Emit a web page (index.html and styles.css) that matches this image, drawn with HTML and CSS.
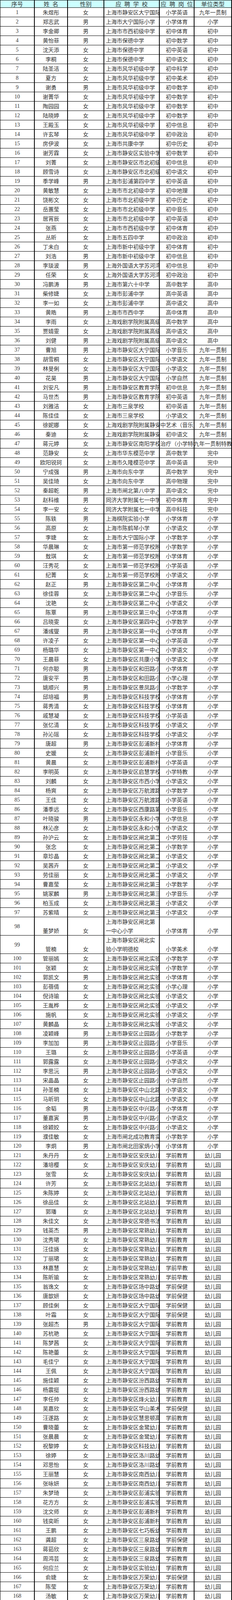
FILE: index.html
```html
<!DOCTYPE html>
<html lang="zh-CN">
<head>
<meta charset="utf-8">
<title>应聘人员名单</title>
<link rel="stylesheet" href="styles.css">
</head>
<body>
<div class="sheet">
<div class="r head"><span>序号</span><span>姓&ensp;名</span><span>性别</span><span>应&ensp;聘&ensp;学&ensp;校</span><span>应&ensp;聘&ensp;岗&ensp;位</span><span>单位类型</span></div>
<div class="r"><span>1</span><span>朱煜彤</span><span>女</span><span>上海市静安区大宁国际学校</span><span>小学英语</span><span>九年一贯制</span></div>
<div class="r"><span>2</span><span>郑志武</span><span>男</span><span>上海市大宁国际小学</span><span>小学体育</span><span>小学</span></div>
<div class="r"><span>3</span><span>李金卿</span><span>男</span><span>上海市市西初级中学</span><span>初中体育</span><span>初中</span></div>
<div class="r"><span>4</span><span>黄怡菲</span><span>男</span><span>上海市保德中学</span><span>初中数学</span><span>初中</span></div>
<div class="r"><span>5</span><span>沈天添</span><span>女</span><span>上海市保德中学</span><span>初中英语</span><span>初中</span></div>
<div class="r"><span>6</span><span>李桐</span><span>女</span><span>上海市保德中学</span><span>初中语文</span><span>初中</span></div>
<div class="r"><span>7</span><span>陆圣洁</span><span>女</span><span>上海市风华初级中学</span><span>初中科学</span><span>初中</span></div>
<div class="r"><span>8</span><span>夏方</span><span>女</span><span>上海市风华初级中学</span><span>初中美术</span><span>初中</span></div>
<div class="r"><span>9</span><span>谢勇</span><span>男</span><span>上海市风华初级中学</span><span>初中数学</span><span>初中</span></div>
<div class="r"><span>10</span><span>谢菁华</span><span>女</span><span>上海市风华初级中学</span><span>初中数学</span><span>初中</span></div>
<div class="r"><span>11</span><span>陶园园</span><span>女</span><span>上海市风华初级中学</span><span>初中数学</span><span>初中</span></div>
<div class="r"><span>12</span><span>陆晓婷</span><span>女</span><span>上海市风华初级中学</span><span>初中数学</span><span>初中</span></div>
<div class="r"><span>13</span><span>王殿玉</span><span>女</span><span>上海市风华初级中学</span><span>初中信息</span><span>初中</span></div>
<div class="r"><span>14</span><span>许玄琴</span><span>女</span><span>上海市风华初级中学</span><span>初中政治</span><span>初中</span></div>
<div class="r"><span>15</span><span>房伊波</span><span>女</span><span>上海市共康中学</span><span>初中历史</span><span>初中</span></div>
<div class="r"><span>16</span><span>谢芳霖</span><span>女</span><span>上海市静安区实验中学</span><span>初中数学</span><span>初中</span></div>
<div class="r"><span>17</span><span>刘菁</span><span>女</span><span>上海市静安区市北初级中学</span><span>初中信息</span><span>初中</span></div>
<div class="r"><span>18</span><span>顾雪诗</span><span>女</span><span>上海市静安区市北初级中学</span><span>初中语文</span><span>初中</span></div>
<div class="r"><span>19</span><span>季学峰</span><span>男</span><span>上海市彭浦第四中学</span><span>初中英语</span><span>初中</span></div>
<div class="r"><span>20</span><span>黄敏慧</span><span>女</span><span>上海市市北初级中学</span><span>初中地理</span><span>初中</span></div>
<div class="r"><span>21</span><span>饶彬文</span><span>女</span><span>上海市市北初级中学</span><span>初中历史</span><span>初中</span></div>
<div class="r"><span>22</span><span>岳蕙莹</span><span>女</span><span>上海市市北初级中学</span><span>初中音乐</span><span>初中</span></div>
<div class="r"><span>23</span><span>居宵辰</span><span>女</span><span>上海市市北初级中学</span><span>初中英语</span><span>初中</span></div>
<div class="r"><span>24</span><span>张燕</span><span>女</span><span>上海市市西初级中学</span><span>初中体育</span><span>初中</span></div>
<div class="r"><span>25</span><span>丛昕</span><span>女</span><span>上海市五四中学</span><span>初中政治</span><span>初中</span></div>
<div class="r"><span>26</span><span>丁未白</span><span>女</span><span>上海市新中初级中学</span><span>初中体育</span><span>初中</span></div>
<div class="r"><span>27</span><span>刘浩</span><span>男</span><span>上海市新中初级中学</span><span>初中信息</span><span>初中</span></div>
<div class="r"><span>28</span><span>李琰波</span><span>男</span><span>上海外国语大学苏河湾实验中学</span><span>初中信息</span><span>初中</span></div>
<div class="r"><span>29</span><span>任荣</span><span>女</span><span>上海外国语大学苏河湾实验中学</span><span>初中政治</span><span>初中</span></div>
<div class="r"><span>30</span><span>冯鹏涛</span><span>男</span><span>上海市第六十中学</span><span>高中数学</span><span>高中</span></div>
<div class="r"><span>31</span><span>柴修婕</span><span>女</span><span>上海市彭浦中学</span><span>高中英语</span><span>高中</span></div>
<div class="r"><span>32</span><span>李一如</span><span>女</span><span>上海市彭浦中学</span><span>高中语文</span><span>高中</span></div>
<div class="r"><span>33</span><span>黄皓</span><span>男</span><span>上海市市西中学</span><span>高中体育</span><span>高中</span></div>
<div class="r"><span>34</span><span>李雨</span><span>女</span><span>上海戏剧学院附属高级中学</span><span>高中数学</span><span>高中</span></div>
<div class="r"><span>35</span><span>贾婧雯</span><span>女</span><span>上海戏剧学院附属高级中学</span><span>高中语文</span><span>高中</span></div>
<div class="r"><span>36</span><span>刘健</span><span>男</span><span>上海戏剧学院附属高级中学</span><span>高中语文</span><span>高中</span></div>
<div class="r"><span>37</span><span>曹旭</span><span>男</span><span>上海市静安区大宁国际学校</span><span>小学音乐</span><span>九年一贯制</span></div>
<div class="r"><span>38</span><span>胡雪桐</span><span>女</span><span>上海市静安区大宁国际学校</span><span>小学语文</span><span>九年一贯制</span></div>
<div class="r"><span>39</span><span>林旻俐</span><span>女</span><span>上海市静安区大宁国际学校</span><span>小学语文</span><span>九年一贯制</span></div>
<div class="r"><span>40</span><span>花昊</span><span>男</span><span>上海市静安区大宁国际学校</span><span>小学自然</span><span>九年一贯制</span></div>
<div class="r"><span>41</span><span>刘安凡</span><span>男</span><span>上海市静安区教育学院附属学校</span><span>初中信息</span><span>九年一贯制</span></div>
<div class="r"><span>42</span><span>马世杰</span><span>男</span><span>上海市静安区教育学院附属学校</span><span>初中英语</span><span>九年一贯制</span></div>
<div class="r"><span>43</span><span>刘雅洁</span><span>女</span><span>上海市三泉学校</span><span>初中英语</span><span>九年一贯制</span></div>
<div class="r"><span>44</span><span>陈佳佳</span><span>女</span><span>上海市三泉学校</span><span>小学语文</span><span>九年一贯制</span></div>
<div class="r"><span>45</span><span>徐妮娜</span><span>女</span><span>上海戏剧学院附属静安学校</span><span>初中艺术（音乐）</span><span>九年一贯制</span></div>
<div class="r"><span>46</span><span>秦迪</span><span>女</span><span>上海戏剧学院附属静安学校</span><span>初中语文</span><span>九年一贯制</span></div>
<div class="r"><span>47</span><span>蒋元婷</span><span>女</span><span>上海市静安区南阳学校</span><span>康复治疗（小学特教）</span><span>九年一贯制特教</span></div>
<div class="r"><span>48</span><span>范静安</span><span>女</span><span>上海市华东模范中学</span><span>高中数学</span><span>完中</span></div>
<div class="r"><span>49</span><span>欧阳锐珂</span><span>女</span><span>上海市久隆模范中学</span><span>高中英语</span><span>完中</span></div>
<div class="r"><span>50</span><span>宁成强</span><span>男</span><span>上海市向东中学</span><span>高中数学</span><span>完中</span></div>
<div class="r"><span>51</span><span>吴佳琦</span><span>女</span><span>上海市向东中学</span><span>高中物理</span><span>完中</span></div>
<div class="r"><span>52</span><span>秦超乾</span><span>男</span><span>上海市闸北第八中学</span><span>高中语文</span><span>完中</span></div>
<div class="r"><span>53</span><span>赵科维</span><span>男</span><span>同济大学附属七一中学</span><span>初中体育</span><span>完中</span></div>
<div class="r"><span>54</span><span>李一安</span><span>女</span><span>同济大学附属七一中学</span><span>高中科技</span><span>完中</span></div>
<div class="r"><span>55</span><span>陈轶</span><span>男</span><span>上海棋院实验小学</span><span>小学体育</span><span>小学</span></div>
<div class="r"><span>56</span><span>高原</span><span>女</span><span>上海市陈鹤琴小学</span><span>小学语文</span><span>小学</span></div>
<div class="r"><span>57</span><span>李婕</span><span>女</span><span>上海市大宁国际小学</span><span>小学数学</span><span>小学</span></div>
<div class="r"><span>58</span><span>华晨琳</span><span>女</span><span>上海市第一师范学校附属小学</span><span>小学数学</span><span>小学</span></div>
<div class="r"><span>59</span><span>敖琪</span><span>女</span><span>上海市第一师范学校附属小学</span><span>小学体育</span><span>小学</span></div>
<div class="r"><span>60</span><span>汪秀花</span><span>女</span><span>上海市第一师范学校附属小学</span><span>小学英语</span><span>小学</span></div>
<div class="r"><span>61</span><span>纪菁</span><span>女</span><span>上海市第一师范学校附属小学</span><span>小学语文</span><span>小学</span></div>
<div class="r"><span>62</span><span>赵正</span><span>男</span><span>上海市静安区第二中心小学</span><span>小学体育</span><span>小学</span></div>
<div class="r"><span>63</span><span>徐佳蓉</span><span>女</span><span>上海市静安区第二中心小学</span><span>小学音乐</span><span>小学</span></div>
<div class="r"><span>64</span><span>沈艳</span><span>女</span><span>上海市静安区第二中心小学</span><span>小学语文</span><span>小学</span></div>
<div class="r"><span>65</span><span>陈覃</span><span>男</span><span>上海市静安区第三中心小学</span><span>小学体育</span><span>小学</span></div>
<div class="r"><span>66</span><span>吕晓雯</span><span>女</span><span>上海市静安区第四中心小学</span><span>小学数学</span><span>小学</span></div>
<div class="r"><span>67</span><span>潘彧燮</span><span>男</span><span>上海市静安区第一中心小学</span><span>小学体育</span><span>小学</span></div>
<div class="r"><span>68</span><span>许凌子</span><span>女</span><span>上海市静安区第一中心小学</span><span>小学英语</span><span>小学</span></div>
<div class="r"><span>69</span><span>杨璐华</span><span>女</span><span>上海市静安区第一中心小学</span><span>小学语文</span><span>小学</span></div>
<div class="r"><span>70</span><span>王晨菲</span><span>女</span><span>上海市静安区共康小学</span><span>小学语文</span><span>小学</span></div>
<div class="r"><span>71</span><span>何亦聪</span><span>男</span><span>上海市静安区和田路小学</span><span>小学体育</span><span>小学</span></div>
<div class="r"><span>72</span><span>唐安平</span><span>男</span><span>上海市静安区和田路小学</span><span>小学心理</span><span>小学</span></div>
<div class="r"><span>73</span><span>姚顺兴</span><span>男</span><span>上海市静安区景凤路小学</span><span>小学数学</span><span>小学</span></div>
<div class="r"><span>74</span><span>邱培福</span><span>男</span><span>上海市静安区科技学校</span><span>小学体育</span><span>小学</span></div>
<div class="r"><span>75</span><span>蒋秀清</span><span>女</span><span>上海市静安区科技学校</span><span>小学体育</span><span>小学</span></div>
<div class="r"><span>76</span><span>戚慧凝</span><span>女</span><span>上海市静安区科技学校</span><span>小学英语</span><span>小学</span></div>
<div class="r"><span>77</span><span>张忆清</span><span>女</span><span>上海市静安区科技学校</span><span>小学语文</span><span>小学</span></div>
<div class="r"><span>78</span><span>孙沁瑶</span><span>女</span><span>上海市静安区科技学校</span><span>小学语文</span><span>小学</span></div>
<div class="r"><span>79</span><span>唐超</span><span>男</span><span>上海市静安区彭浦新村第一小学</span><span>小学体育</span><span>小学</span></div>
<div class="r"><span>80</span><span>史媛</span><span>女</span><span>上海市静安区彭浦新村第一小学</span><span>小学音乐</span><span>小学</span></div>
<div class="r"><span>81</span><span>黄晨</span><span>女</span><span>上海市静安区彭浦新村第一小学</span><span>小学英语</span><span>小学</span></div>
<div class="r"><span>82</span><span>李明英</span><span>女</span><span>上海市静安区启慧学校</span><span>小学特教</span><span>小学</span></div>
<div class="r"><span>83</span><span>刘麟</span><span>女</span><span>上海市静安区市西小学</span><span>小学语文</span><span>小学</span></div>
<div class="r"><span>84</span><span>杨爽</span><span>女</span><span>上海市静安区万航渡路小学</span><span>小学数学</span><span>小学</span></div>
<div class="r"><span>85</span><span>王佳</span><span>女</span><span>上海市静安区万航渡路小学</span><span>小学英语</span><span>小学</span></div>
<div class="r"><span>86</span><span>潘季远</span><span>女</span><span>上海市静安区西康路第三小学</span><span>小学音乐</span><span>小学</span></div>
<div class="r"><span>87</span><span>叶晓骏</span><span>男</span><span>上海市静安区永和小学</span><span>小学信息</span><span>小学</span></div>
<div class="r"><span>88</span><span>林沁彦</span><span>女</span><span>上海市静安区永和小学</span><span>小学语文</span><span>小学</span></div>
<div class="r"><span>89</span><span>孙沪云</span><span>女</span><span>上海市静安区闸北第二中心小学</span><span>小学劳技</span><span>小学</span></div>
<div class="r"><span>90</span><span>张念</span><span>女</span><span>上海市静安区闸北第二中心小学</span><span>小学数学</span><span>小学</span></div>
<div class="r"><span>91</span><span>章珍晶</span><span>女</span><span>上海市静安区闸北第二中心小学</span><span>小学语文</span><span>小学</span></div>
<div class="r"><span>92</span><span>吴茜卉</span><span>女</span><span>上海市静安区闸北第二中心小学</span><span>小学语文</span><span>小学</span></div>
<div class="r"><span>93</span><span>劳佳丽</span><span>女</span><span>上海市静安区闸北第二中心小学</span><span>小学语文</span><span>小学</span></div>
<div class="r"><span>94</span><span>曹嘉莹</span><span>女</span><span>上海市静安区闸北第三中心小学</span><span>小学数学</span><span>小学</span></div>
<div class="r"><span>95</span><span>姚家麟</span><span>男</span><span>上海市静安区闸北第三中心小学</span><span>小学音乐</span><span>小学</span></div>
<div class="r"><span>96</span><span>柏玉成</span><span>女</span><span>上海市静安区闸北第三中心小学</span><span>小学语文</span><span>小学</span></div>
<div class="r"><span>97</span><span>苏紫晴</span><span>女</span><span>上海市静安区闸北第三中心小学</span><span>小学语文</span><span>小学</span></div>
<div class="r tall"><span>98</span><span>董梦娇</span><span>女</span><span>上海市静安区闸北第一中心小学</span><span>小学体育</span><span>小学</span></div>
<div class="r tall"><span>99</span><span>管楠</span><span>女</span><span>上海市静安区闸北实验小学明德校</span><span>小学美术</span><span>小学</span></div>
<div class="r"><span>100</span><span>管丽嫣</span><span>女</span><span>上海市静安区闸北实验小学</span><span>小学数学</span><span>小学</span></div>
<div class="r"><span>101</span><span>张颖</span><span>女</span><span>上海市静安区闸北实验小学</span><span>小学数学</span><span>小学</span></div>
<div class="r"><span>102</span><span>郭凯文</span><span>男</span><span>上海市静安区闸北实验小学</span><span>小学体育</span><span>小学</span></div>
<div class="r"><span>103</span><span>彭蓓倩</span><span>女</span><span>上海市静安区闸北实验小学</span><span>小学心理</span><span>小学</span></div>
<div class="r"><span>104</span><span>倪诗瑜</span><span>女</span><span>上海市静安区闸北实验小学</span><span>小学语文</span><span>小学</span></div>
<div class="r"><span>105</span><span>王胤桦</span><span>女</span><span>上海市静安区闸北实验小学</span><span>小学语文</span><span>小学</span></div>
<div class="r"><span>106</span><span>施帆</span><span>女</span><span>上海市静安区闸北实验小学</span><span>小学语文</span><span>小学</span></div>
<div class="r"><span>107</span><span>黄麟晶</span><span>女</span><span>上海市静安区闸北实验小学</span><span>小学语文</span><span>小学</span></div>
<div class="r"><span>108</span><span>凌颖峰</span><span>男</span><span>上海市静安区止园路小学</span><span>小学数学</span><span>小学</span></div>
<div class="r"><span>109</span><span>李加加</span><span>男</span><span>上海市静安区止园路小学</span><span>小学音乐</span><span>小学</span></div>
<div class="r"><span>110</span><span>王璐</span><span>女</span><span>上海市静安区止园路小学</span><span>小学英语</span><span>小学</span></div>
<div class="r"><span>111</span><span>郭露露</span><span>女</span><span>上海市静安区止园路小学</span><span>小学语文</span><span>小学</span></div>
<div class="r"><span>112</span><span>李思沅</span><span>男</span><span>上海市静安区止园路小学</span><span>小学语文</span><span>小学</span></div>
<div class="r"><span>113</span><span>宋晶晶</span><span>女</span><span>上海市静安区止园路小学</span><span>小学自然</span><span>小学</span></div>
<div class="r"><span>114</span><span>孙圣楠</span><span>女</span><span>上海市静安区中山北路小学</span><span>小学语文</span><span>小学</span></div>
<div class="r"><span>115</span><span>马昕玥</span><span>女</span><span>上海市静安区中山北路小学</span><span>小学语文</span><span>小学</span></div>
<div class="r"><span>116</span><span>余韬</span><span>男</span><span>上海市静安区中兴路小学</span><span>小学体育</span><span>小学</span></div>
<div class="r"><span>117</span><span>董嘉寅</span><span>男</span><span>上海市静安区中兴路小学</span><span>小学语文</span><span>小学</span></div>
<div class="r"><span>118</span><span>徐颖姣</span><span>女</span><span>上海市静安区中兴路小学</span><span>小学语文</span><span>小学</span></div>
<div class="r"><span>119</span><span>濮佳敏</span><span>女</span><span>上海市闸北成功教育实验小学</span><span>小学数学</span><span>小学</span></div>
<div class="r"><span>120</span><span>李炯</span><span>男</span><span>上海市闸北田家炳小学</span><span>小学体育</span><span>小学</span></div>
<div class="r"><span>121</span><span>朱丹丹</span><span>女</span><span>上海市静安区安庆幼儿园</span><span>学前教育</span><span>幼儿园</span></div>
<div class="r"><span>122</span><span>潘培樱</span><span>女</span><span>上海市静安区安庆幼儿园</span><span>学前教育</span><span>幼儿园</span></div>
<div class="r"><span>123</span><span>张雪</span><span>女</span><span>上海市静安区安庆幼儿园</span><span>学前教育</span><span>幼儿园</span></div>
<div class="r"><span>124</span><span>许芳</span><span>女</span><span>上海市静安区北站幼儿园</span><span>学前教育</span><span>幼儿园</span></div>
<div class="r"><span>125</span><span>朱陈婷</span><span>女</span><span>上海市静安区北站幼儿园</span><span>学前教育</span><span>幼儿园</span></div>
<div class="r"><span>126</span><span>徐品佳</span><span>女</span><span>上海市静安区北站幼儿园</span><span>学前教育</span><span>幼儿园</span></div>
<div class="r"><span>127</span><span>郭璠</span><span>女</span><span>上海市静安区北站幼儿园</span><span>学前教育</span><span>幼儿园</span></div>
<div class="r"><span>128</span><span>朱佳文</span><span>女</span><span>上海市静安区常德书法幼儿园</span><span>学前教育</span><span>幼儿园</span></div>
<div class="r"><span>129</span><span>钱英杰</span><span>男</span><span>上海市静安区常熟幼儿园</span><span>学前教育</span><span>幼儿园</span></div>
<div class="r"><span>130</span><span>沈秀珺</span><span>女</span><span>上海市静安区常熟幼儿园</span><span>学前教育</span><span>幼儿园</span></div>
<div class="r"><span>131</span><span>汪佳旖</span><span>女</span><span>上海市静安区常熟幼儿园</span><span>学前教育</span><span>幼儿园</span></div>
<div class="r"><span>132</span><span>丁丽珺</span><span>女</span><span>上海市静安区常熟幼儿园</span><span>学前教育</span><span>幼儿园</span></div>
<div class="r"><span>133</span><span>林嘉慧</span><span>女</span><span>上海市静安区常熟幼儿园</span><span>学前早教</span><span>幼儿园</span></div>
<div class="r"><span>134</span><span>陈昕瑜</span><span>女</span><span>上海市静安区常熟幼儿园</span><span>学前早教</span><span>幼儿园</span></div>
<div class="r"><span>135</span><span>翁逸文</span><span>女</span><span>上海市静安区场中路幼儿园</span><span>学前保健</span><span>幼儿园</span></div>
<div class="r"><span>136</span><span>唐歆妍</span><span>女</span><span>上海市静安区场中路幼儿园</span><span>学前保健</span><span>幼儿园</span></div>
<div class="r"><span>137</span><span>顾佳俐</span><span>女</span><span>上海市静安区大宁国际幼儿园</span><span>学前保健</span><span>幼儿园</span></div>
<div class="r"><span>138</span><span>叶霜</span><span>女</span><span>上海市静安区大宁国际幼儿园</span><span>学前保健</span><span>幼儿园</span></div>
<div class="r"><span>139</span><span>张超杰</span><span>男</span><span>上海市静安区大宁国际幼儿园</span><span>学前教育</span><span>幼儿园</span></div>
<div class="r"><span>140</span><span>苏杭艳</span><span>女</span><span>上海市静安区大宁国际幼儿园</span><span>学前教育</span><span>幼儿园</span></div>
<div class="r"><span>141</span><span>陈梦茜</span><span>女</span><span>上海市静安区大宁国际幼儿园</span><span>学前教育</span><span>幼儿园</span></div>
<div class="r"><span>142</span><span>陈艳蕾</span><span>女</span><span>上海市静安区大宁国际幼儿园</span><span>学前教育</span><span>幼儿园</span></div>
<div class="r"><span>143</span><span>毛佳宁</span><span>女</span><span>上海市静安区大宁国际幼儿园</span><span>学前教育</span><span>幼儿园</span></div>
<div class="r"><span>144</span><span>王佩</span><span>女</span><span>上海市静安区大宁国际幼儿园</span><span>学前教育</span><span>幼儿园</span></div>
<div class="r"><span>145</span><span>施佳颖</span><span>女</span><span>上海市静安区汾西路幼儿园</span><span>学前教育</span><span>幼儿园</span></div>
<div class="r"><span>146</span><span>杨震挺</span><span>女</span><span>上海市静安区汾西路幼儿园</span><span>学前教育</span><span>幼儿园</span></div>
<div class="r"><span>147</span><span>李任帅</span><span>女</span><span>上海市静安区烽火幼儿园</span><span>学前教育</span><span>幼儿园</span></div>
<div class="r"><span>148</span><span>吴嘉欣</span><span>女</span><span>上海市静安区华山美术幼儿园</span><span>学前保健</span><span>幼儿园</span></div>
<div class="r"><span>149</span><span>汪遂路</span><span>女</span><span>上海市静安区慧思顿高级幼儿园</span><span>学前教育</span><span>幼儿园</span></div>
<div class="r"><span>150</span><span>曹晓蕾</span><span>女</span><span>上海市静安区金鹭幼儿园</span><span>学前教育</span><span>幼儿园</span></div>
<div class="r"><span>151</span><span>张晨晨</span><span>女</span><span>上海市静安区金鹭幼儿园</span><span>学前教育</span><span>幼儿园</span></div>
<div class="r"><span>152</span><span>祝黎婷</span><span>女</span><span>上海市静安区科技幼儿园</span><span>学前教育</span><span>幼儿园</span></div>
<div class="r"><span>153</span><span>徐婷</span><span>女</span><span>上海市静安区洛川路幼儿园</span><span>学前教育</span><span>幼儿园</span></div>
<div class="r"><span>154</span><span>邓思怡</span><span>女</span><span>上海市静安区洛川路幼儿园</span><span>学前教育</span><span>幼儿园</span></div>
<div class="r"><span>155</span><span>王丽慧</span><span>女</span><span>上海市静安区南西幼儿园</span><span>学前教育</span><span>幼儿园</span></div>
<div class="r"><span>156</span><span>张咏妍</span><span>女</span><span>上海市静安区南西幼儿园</span><span>学前教育</span><span>幼儿园</span></div>
<div class="r"><span>157</span><span>朱梦琦</span><span>女</span><span>上海市静安区彭浦实验幼儿园</span><span>学前教育</span><span>幼儿园</span></div>
<div class="r"><span>158</span><span>花方方</span><span>女</span><span>上海市静安区彭浦实验幼儿园</span><span>学前教育</span><span>幼儿园</span></div>
<div class="r"><span>159</span><span>沈文师</span><span>女</span><span>上海市静安区彭浦新村幼儿园</span><span>学前教育</span><span>幼儿园</span></div>
<div class="r"><span>160</span><span>钱奕昕</span><span>女</span><span>上海市静安区彭浦新村幼儿园</span><span>学前教育</span><span>幼儿园</span></div>
<div class="r"><span>161</span><span>王鹏</span><span>女</span><span>上海市静安区七巧板幼儿园</span><span>学前教育</span><span>幼儿园</span></div>
<div class="r"><span>162</span><span>龚超</span><span>女</span><span>上海市静安区三泉路幼儿园</span><span>学前保健</span><span>幼儿园</span></div>
<div class="r"><span>163</span><span>蒋茹欣</span><span>女</span><span>上海市静安区三泉路幼儿园</span><span>学前教育</span><span>幼儿园</span></div>
<div class="r"><span>164</span><span>周鸿芸</span><span>女</span><span>上海市静安区三泉路幼儿园</span><span>学前教育</span><span>幼儿园</span></div>
<div class="r"><span>165</span><span>何应兰</span><span>女</span><span>上海市静安区实验幼儿园</span><span>学前教育</span><span>幼儿园</span></div>
<div class="r"><span>166</span><span>俞婕</span><span>女</span><span>上海市静安区万荣幼儿园</span><span>学前保健</span><span>幼儿园</span></div>
<div class="r"><span>167</span><span>陈莹</span><span>女</span><span>上海市静安区万荣幼儿园</span><span>学前教育</span><span>幼儿园</span></div>
<div class="r"><span>168</span><span>汤敏</span><span>女</span><span>上海市静安区万荣幼儿园</span><span>学前教育</span><span>幼儿园</span></div>
<div class="r"><span>169</span><span>夏青</span><span>女</span><span>上海市静安区威海路幼儿园</span><span>学前教育</span><span>幼儿园</span></div>
<div class="r"><span>170</span><span>张妍</span><span>女</span><span>上海市静安区吴江幼儿园</span><span>学前教育</span><span>幼儿园</span></div>
<div class="r"><span>171</span><span>张婷</span><span>女</span><span>上海市静安区小金鹭幼儿园</span><span>学前教育</span><span>幼儿园</span></div>
<div class="r"><span>172</span><span>赵超群</span><span>女</span><span>上海市静安区小棋圣幼儿园</span><span>学前教育</span><span>幼儿园</span></div>
<div class="r"><span>173</span><span>李雯铃</span><span>女</span><span>上海市静安区小棋圣幼儿园</span><span>学前教育</span><span>幼儿园</span></div>
<div class="r"><span>174</span><span>周芳菲</span><span>女</span><span>上海市静安区延长路东方幼儿园</span><span>学前教育</span><span>幼儿园</span></div>
<div class="r"><span>175</span><span>吕双双</span><span>女</span><span>上海市静安区延长路东方幼儿园</span><span>学前教育</span><span>幼儿园</span></div>
<div class="r"><span>176</span><span>周静</span><span>女</span><span>上海市静安区延长路东方幼儿园</span><span>学前教育</span><span>幼儿园</span></div>
<div class="r"><span>177</span><span>周海亮</span><span>女</span><span>上海市静安区延长路幼儿园</span><span>学前教育</span><span>幼儿园</span></div>
<div class="r"><span>178</span><span>顾幸怡</span><span>女</span><span>上海市静安区银都幼儿园</span><span>学前保健</span><span>幼儿园</span></div>
<div class="r"><span>179</span><span>钱晓丹</span><span>女</span><span>上海市静安区永和路幼儿园</span><span>学前教育</span><span>幼儿园</span></div>
<div class="r"><span>180</span><span>吕月泳</span><span>女</span><span>上海市静安区永和路幼儿园</span><span>学前教育</span><span>幼儿园</span></div>
<div class="r"><span>181</span><span>施心颖</span><span>女</span><span>上海市静安区芷江中路幼儿园</span><span>学前教育</span><span>幼儿园</span></div>
<div class="r"><span>182</span><span>庄逸</span><span>女</span><span>上海市静安区芷江中路幼儿园</span><span>学前教育</span><span>幼儿园</span></div>
<div class="r"><span>183</span><span>严佳晶</span><span>女</span><span>上海市静安区中华新路幼儿园</span><span>学前保健</span><span>幼儿园</span></div>
<div class="r"><span>184</span><span>沈佳全</span><span>女</span><span>上海市静安区中山北路幼儿园</span><span>学前教育3</span><span>幼儿园</span></div>
<div class="r"><span>185</span><span>刘琰</span><span>女</span><span>上海市静安区中山北路幼儿园</span><span>学前教育</span><span>幼儿园</span></div>
<div class="r"><span>186</span><span>王贤超</span><span>男</span><span>上海市静安区青少年活动中心</span><span>校外&ensp;场馆活动组织</span><span>其他</span></div>
<div class="r"><span>187</span><span>高姗</span><span>女</span><span>上海市静安区青少年活动中心</span><span>校外&ensp;活动策划</span><span>其他</span></div>
<div class="r"><span>188</span><span>陆佳怡</span><span>女</span><span>上海市静安区青少年活动中心</span><span>校外&ensp;民乐教师</span><span>其他</span></div>
<div class="r"><span>189</span><span>黄天晨</span><span>男</span><span>上海市静安区青少年活动中心</span><span>校外&ensp;西乐指导</span><span>其他</span></div>
<div class="r"><span>190</span><span>张思宇</span><span>男</span><span>上海市闸北田家炳小学</span><span>小学体育</span><span>小学</span></div>
<div class="r"><span>191</span><span>左雯嫣</span><span>女</span><span>上海市静安区金鹭幼儿园</span><span>学前教育</span><span>幼儿园</span></div>
<div class="r"><span>192</span><span>张静</span><span>女</span><span>上海市静安区童兴幼儿园</span><span>学前保健</span><span>幼儿园</span></div>
</div>
</body>
</html>
```
FILE: styles.css
```css
html, body {
  margin: 0;
  padding: 0;
  background: #ffffff;
}

.sheet {
  width: 594px;
  box-sizing: border-box;
  border-top: 1px solid #000000;
  border-left: 1px solid #000000;
  font-family: "Noto Sans CJK SC", sans-serif;
  font-size: 14px;
  color: #333333;
}

.r {
  display: grid;
  grid-template-columns: 88px 85px 93px 142px 89px 96px;
  grid-template-rows: 23px;
  border-bottom: 1px solid #000000;
}

.r > span {
  display: flex;
  align-items: center;
  justify-content: center;
  min-width: 0;
  min-height: 0;
  border-right: 2px solid #000000;
  overflow: hidden;
  white-space: nowrap;
  line-height: 23px;
}

.r > span:first-child {
  font-family: "Liberation Serif", serif;
}

.r > span:nth-child(4) {
  justify-content: flex-start;
  padding-left: 4px;
}

.head {
  grid-template-rows: 18px;
  background: #ccffff;
  font-size: 15px;
}

.head > span {
  line-height: 18px;
  overflow: visible;
}

.head > span:first-child {
  font-family: "Noto Sans CJK SC", sans-serif;
}

.head > span:nth-child(4) {
  justify-content: center;
  padding-left: 0;
}

.tall {
  grid-template-rows: 46px;
}

.tall > span {
  align-items: flex-end;
}

.tall > span:first-child {
  align-items: center;
}

.tall > span:nth-child(4) {
  display: block;
  white-space: normal;
}
```
